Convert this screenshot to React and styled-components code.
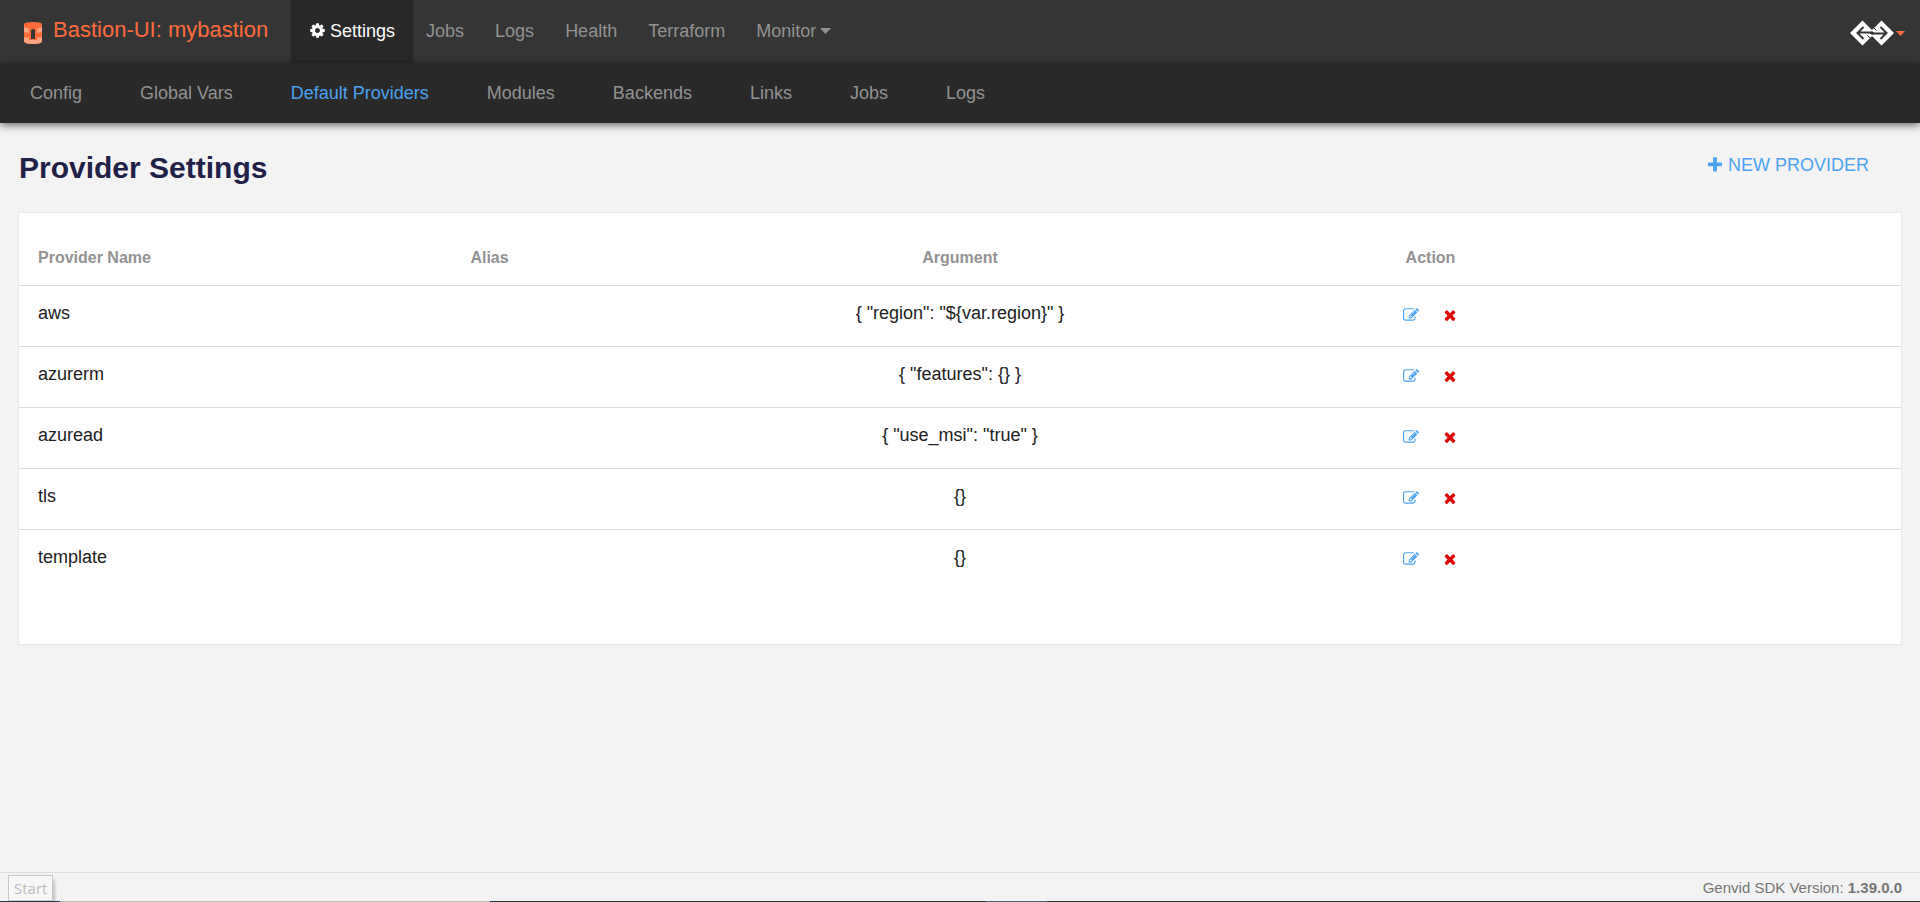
import React, {Fragment} from 'react';
import styled, {createGlobalStyle, ThemeProvider} from 'styled-components';

const theme = {
    fontSizes: {
        small: '15px',
        table: '16px',
        medium: '18px',
        brand: '22px',
        title: '30px',
    },
    colors: {
        header: '#353535',
        subHeader: '#292929',
        page: '#f3f3f3',
        line: '#dedede',
        brand: '#ff6c3a',
        link: '#4ba3f0',
        danger: '#dd0000',
        textColors: {
            primary: '#212121',
            secondary: '#929292',
            title: '#1f2148',
            footer: '#757575',
        },
    },
};

const GlobalStyle = createGlobalStyle`
    *, *::before, *::after {
        box-sizing: border-box;
    }
    body {
        margin: 0;
        background: ${props => props.theme.colors.page};
        color: ${props => props.theme.colors.textColors.primary};
        font-family: "Liberation Sans", Arial, sans-serif;
        font-size: ${props => props.theme.fontSizes.medium};
        line-height: 24px;
    }
    a {
        color: inherit;
        text-decoration: none;
    }
`;

const Page = styled.div`
    display: flex;
    flex-direction: column;
    min-height: 100vh;
`;

const TopBar = styled.header`
    display: flex;
    align-items: stretch;
    height: 63px;
    padding-right: 15px;
    background: ${props => props.theme.colors.header};
`;

const Brand = styled.a`
    display: flex;
    align-items: center;
    gap: 11px;
    width: 291px;
    padding: 0 0 4px 24px;
    color: ${props => props.theme.colors.brand};
    font-size: ${props => props.theme.fontSizes.brand};
    white-space: nowrap;
    svg {
        margin-top: 6px;
    }
`;

const MainNav = styled.nav`
    display: flex;
    flex: 1;
`;

const MainLink = styled.a`
    display: flex;
    align-items: center;
    gap: 4px;
    padding: ${props => props.$active ? '0 18px 2px' : '0 16px 2px 15px'};
    margin-right: ${props => props.$active ? '-2px' : '0'};
    color: ${props => props.$active ? '#fff' : props.theme.colors.textColors.secondary};
    background: ${props => props.$active ? props.theme.colors.subHeader : 'transparent'};
`;

const MenuButton = styled.button`
    display: flex;
    align-items: center;
    gap: 4px;
    padding: 0 16px 2px 15px;
    border: 0;
    background: none;
    color: ${props => props.theme.colors.textColors.secondary};
    font: inherit;
    cursor: pointer;
`;

const LogoButton = styled(MenuButton)`
    gap: 2px;
    padding: 3px 0 0;
    color: ${props => props.theme.colors.brand};
`;

const SubNav = styled.nav`
    display: flex;
    align-items: center;
    gap: 58px;
    height: 60px;
    padding-left: 30px;
    background: ${props => props.theme.colors.subHeader};
    box-shadow: 0 2px 8px rgba(0, 0, 0, 0.6);
`;

const SubLink = styled.a`
    color: ${props => props.$active ? props.theme.colors.link : props.theme.colors.textColors.secondary};
`;

const Main = styled.main`
    flex: 1;
    padding: 24px 18px;
`;

const TitleRow = styled.div`
    display: flex;
    justify-content: space-between;
    padding: 0 33px 0 1px;
    margin-bottom: 24px;
`;

const Title = styled.h1`
    margin: 0;
    color: ${props => props.theme.colors.textColors.title};
    font-size: ${props => props.theme.fontSizes.title};
    line-height: 41px;
`;

const NewButton = styled.button`
    display: flex;
    align-items: center;
    gap: 4px;
    height: 36px;
    padding: 0;
    border: 0;
    background: none;
    color: ${props => props.theme.colors.link};
    font: inherit;
    text-transform: uppercase;
    cursor: pointer;
`;

const Card = styled.section`
    padding: 18px 0 53px;
    border: 1px solid #e8e8e8;
    background: #fff;
`;

const Table = styled.table`
    width: 100%;
    table-layout: fixed;
    border-collapse: separate;
    border-spacing: 0;
`;

const HeadCell = styled.th`
    width: ${props => props.$width};
    height: 55px;
    padding: 0 0 1px;
    padding-left: ${props => props.$left ? '19px' : '0'};
    border-bottom: 1px solid ${props => props.theme.colors.line};
    color: ${props => props.theme.colors.textColors.secondary};
    font-size: ${props => props.theme.fontSizes.table};
    text-align: ${props => props.$left ? 'left' : 'center'};
`;

const Row = styled.tr`
    &:not(:last-child) td {
        border-bottom: 1px solid ${props => props.theme.colors.line};
    }
`;

const Cell = styled.td`
    height: 61px;
    padding: 15px 0 0;
    padding-left: ${props => props.$left ? '19px' : '0'};
    text-align: ${props => props.$left ? 'left' : 'center'};
    vertical-align: top;
`;

const Actions = styled.div`
    display: flex;
    justify-content: center;
    gap: 23px;
    padding-top: 6px;
`;

const IconButton = styled.button`
    display: flex;
    padding: 0;
    border: 0;
    background: none;
    color: ${props => props.$danger ? props.theme.colors.danger : props.theme.colors.link};
    cursor: pointer;
`;

const Footer = styled.footer`
    position: relative;
    display: flex;
    justify-content: flex-end;
    height: 30px;
    padding: 3px 18px 0 0;
    border-top: 1px solid ${props => props.theme.colors.line};
    color: ${props => props.theme.colors.textColors.footer};
    font-size: ${props => props.theme.fontSizes.small};
`;

/* edge of the desktop task bar under the page */
const TaskEdge = styled.div`
    position: absolute;
    left: 0;
    right: 0;
    bottom: 0;
    height: 1px;
    background: linear-gradient(to right, #2c3a44 60px, #bdbdbd 60px, #bdbdbd 490px, #1f3040 490px, #1f3040 986px, #56636e 986px, #56636e 1047px, #1f3040 1047px);
`;

const Tooltip = styled.div`
    position: absolute;
    left: 8px;
    bottom: 1px;
    padding: 0 5px;
    border: 1px solid #c8c8c8;
    background: #f7f7f7;
    box-shadow: 3px 4px 3px -1px rgba(0, 0, 0, 0.2);
    color: #bdbdbd;
    font-family: "Open Sans", sans-serif;
    font-size: ${props => props.theme.fontSizes.small};
    line-height: 24px;
`;

const icons = {
    cog: 'M1152 896q0-106-75-181t-181-75-181 75-75 181 75 181 181 75 181-75 75-181zm512-109v222q0 12-8 23t-20 13l-185 28q-19 54-39 91 35 50 107 138 10 12 10 25t-9 23q-27 37-99 108t-94 71q-12 0-26-9l-138-108q-44 23-91 38-16 136-29 186-7 28-36 28h-222q-14 0-24.5-8.5t-11.5-21.5l-28-184q-49-16-90-37l-141 107q-10 9-25 9-14 0-25-11-126-114-165-168-7-10-7-23 0-12 8-23 15-21 51-66.5t54-70.5q-27-50-41-99l-183-27q-13-2-21-12.5t-8-23.5v-222q0-12 8-23t19-13l186-28q14-46 39-92-40-57-107-138-10-12-10-24 0-10 9-23 26-36 98.5-107.5t94.5-71.5q13 0 26 10l138 107q44-23 91-38 16-136 29-186 7-28 36-28h222q14 0 24.5 8.5t11.5 21.5l28 184q49 16 90 37l142-107q9-9 24-9 13 0 25 10 129 119 165 170 7 8 7 22 0 12-8 23-15 21-51 66.5t-54 70.5q26 50 41 98l183 28q13 2 21 12.5t8 23.5z',
    plus: 'M1600 736v192q0 40-28 68t-68 28h-416v416q0 40-28 68t-68 28h-192q-40 0-68-28t-28-68v-416h-416q-40 0-68-28t-28-68v-192q0-40 28-68t68-28h416v-416q0-40 28-68t68-28h192q40 0 68 28t28 68v416h416q40 0 68 28t28 68z',
    edit: 'M888 1184l116-116-152-152-116 116v56h96v96h56zm440-720q-16-16-33 1l-350 350q-17 17-1 33t33-1l350-350q17-17 1-33zm80 594v190q0 119-84.5 203.5t-203.5 84.5h-832q-119 0-203.5-84.5t-84.5-203.5v-832q0-119 84.5-203.5t203.5-84.5h832q63 0 117 25 15 7 18 23 3 17-9 29l-49 49q-14 14-32 8-23-6-45-6h-832q-66 0-113 47t-47 113v832q0 66 47 113t113 47h832q66 0 113-47t47-113v-126q0-13 9-22l64-64q15-15 35-7t20 29zm-96-738l288 288-672 672h-288v-288zm444 132l-92 92-288-288 92-92q28-28 68-28t68 28l152 152q28 28 28 68t-28 68z',
    times: 'M1490 1322q0 40-28 68l-136 136q-28 28-68 28t-68-28l-294-294-294 294q-28 28-68 28t-68-28l-136-136q-28-28-28-68t28-68l294-294-294-294q-28-28-28-68t28-68l136-136q28-28 68-28t68 28l294 294 294-294q28-28 68-28t68 28l136 136q28 28 28 68t-28 68l-294 294 294 294q28 28 28 68z',
};

function Icon({name, size})
{
    return <svg width={size} height={size} viewBox="0 0 1792 1792" fill="currentColor" aria-hidden="true">
        <path d={icons[name]} />
    </svg>
}

function Caret({width, height})
{
    return <svg width={width} height={height} viewBox="0 0 10 6" preserveAspectRatio="none" fill="currentColor" aria-hidden="true">
        <path d="M0 0h10L5 6z" />
    </svg>
}

function TowerIcon()
{
    return <svg width="18" height="24" viewBox="0 0 18 24" aria-hidden="true">
        <path d="M0 3v17q0 3 9 3t9-3V3z" fill="#ff6c3a" />
        <path d="M0 6q4 2 9 2t9-2v5q-4 1-9 1t-9-1z" fill="#ffa27f" />
        <path d="M0 16q4 1 9 1t9-1v4q0 3-9 3t-9-3z" fill="#ffa27f" />
        <ellipse cx="9" cy="3" rx="9" ry="2" fill="#ff6c3a" />
        <path d="M5 19V8q1-2 4-2t4 2v11z" fill="#ff6c3a" />
        <path d="M7 18V9q2-2 4 0v9z" fill="#353535" />
    </svg>
}

function GenvidLogo()
{
    return <svg width="44" height="26" viewBox="0 0 44 26" aria-hidden="true">
        <path d="M0 13L12.500 .5 22 10 31.500 .5 44 13 31.500 25.500 22 16 12.500 25.500z" fill="#fff" />
        <path d="M13.500 7L7.500 13l6 6M8 12.500h12l3 1.500M30.500 7l6 6-6 6M36 13.500H24l-3-1.500" fill="none" stroke="#353535" strokeWidth="2" />
        <path d="M23.500 7.500l3 3M17.500 15.500l3 3" fill="none" stroke="#353535" strokeWidth="1" />
    </svg>
}

const mainLinks = ['Jobs', 'Logs', 'Health', 'Terraform'];

const subLinks = ['Config', 'Global Vars', 'Default Providers', 'Modules', 'Backends', 'Links', 'Jobs', 'Logs'];

const providers = [
    {name: 'aws', alias: '', argument: '{ "region": "${var.region}" }'},
    {name: 'azurerm', alias: '', argument: '{ "features": {} }'},
    {name: 'azuread', alias: '', argument: '{ "use_msi": "true" }'},
    {name: 'tls', alias: '', argument: '{}'},
    {name: 'template', alias: '', argument: '{}'},
];

function Header()
{
    return <Fragment>
        <TopBar>
            <Brand href="#"><TowerIcon />Bastion-UI: mybastion</Brand>
            <MainNav>
                <MainLink href="#" $active><Icon name="cog" size={17} />Settings</MainLink>
                {mainLinks.map(link => <MainLink href="#" key={link}>{link}</MainLink>)}
                <MenuButton type="button">Monitor<Caret width={11} height={6} /></MenuButton>
            </MainNav>
            <LogoButton type="button" aria-label="Genvid menu"><GenvidLogo /><Caret width={9} height={5} /></LogoButton>
        </TopBar>
        <SubNav>
            {subLinks.map(link => <SubLink href="#" key={link} $active={link === 'Default Providers'}>{link}</SubLink>)}
        </SubNav>
    </Fragment>
}

function ProviderRow({data})
{
    return <Row>
        <Cell $left>{data.name}</Cell>
        <Cell>{data.alias}</Cell>
        <Cell>{data.argument}</Cell>
        <Cell>
            <Actions>
                <IconButton type="button" aria-label={`Edit ${data.name}`}><Icon name="edit" size={16} /></IconButton>
                <IconButton type="button" $danger aria-label={`Delete ${data.name}`}><Icon name="times" size={16} /></IconButton>
            </Actions>
        </Cell>
        <Cell />
    </Row>
}

function App()
{
    return <ThemeProvider theme={theme}>
        <GlobalStyle />
        <Page>
            <Header />
            <Main>
                <TitleRow>
                    <Title>Provider Settings</Title>
                    <NewButton type="button"><Icon name="plus" size={18} />New Provider</NewButton>
                </TitleRow>
                <Card>
                    <Table>
                        <thead>
                            <tr>
                                <HeadCell $left $width="12.5%">Provider Name</HeadCell>
                                <HeadCell $width="25%">Alias</HeadCell>
                                <HeadCell $width="25%">Argument</HeadCell>
                                <HeadCell $width="25%">Action</HeadCell>
                                <HeadCell $width="12.5%" />
                            </tr>
                        </thead>
                        <tbody>
                            {providers.map(item => <ProviderRow key={item.name} data={item} />)}
                        </tbody>
                    </Table>
                </Card>
            </Main>
            <Footer>
                <Tooltip>Start</Tooltip>
                <span>Genvid SDK Version: <b>1.39.0.0</b></span>
                <TaskEdge />
            </Footer>
        </Page>
    </ThemeProvider>
}

export default App;
